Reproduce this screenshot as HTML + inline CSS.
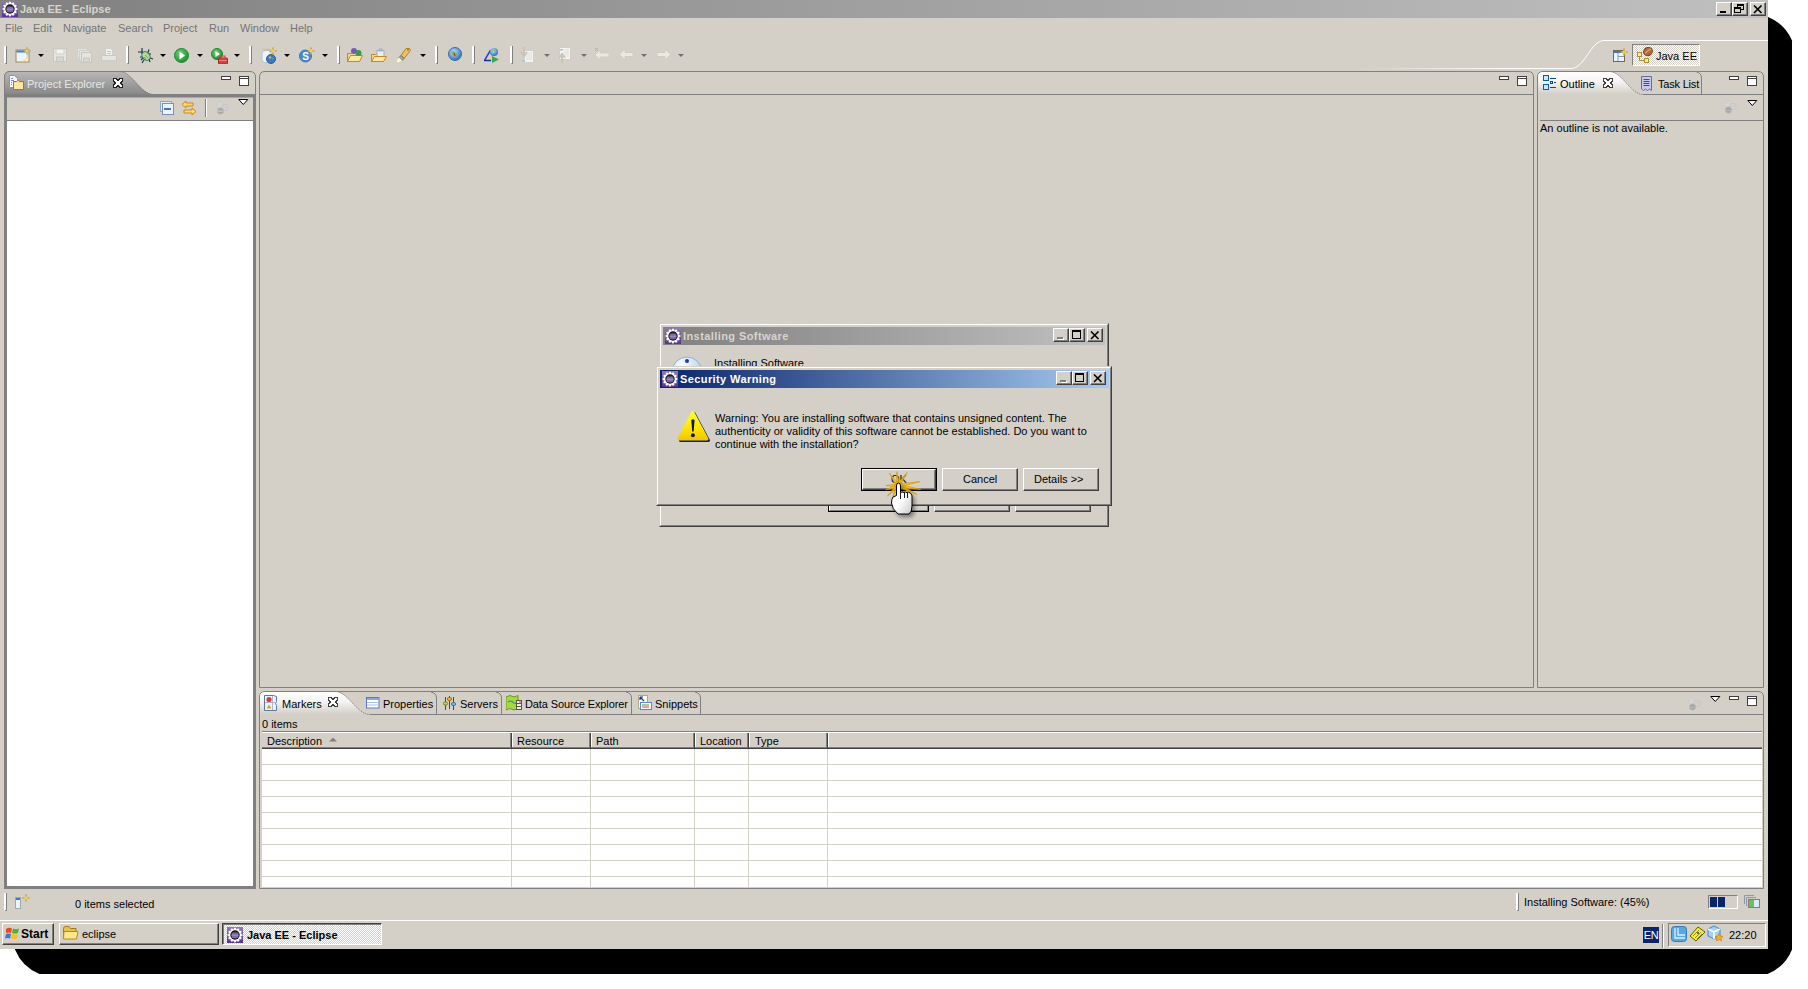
<!DOCTYPE html>
<html><head><meta charset="utf-8">
<style>
*{box-sizing:border-box}
html,body{margin:0;padding:0}
body{width:1808px;height:989px;position:relative;overflow:hidden;background:#fff;font-family:"Liberation Sans",sans-serif;font-size:11px;color:#000}
.a{position:absolute}
.t{position:absolute;white-space:nowrap;line-height:13px}
#shadow{left:15px;top:17px;width:1777px;height:957px;background:#000;border-radius:25px}
#win{left:0;top:0;width:1768px;height:949px;background:#d4d0c8;overflow:hidden}
#title{left:0;top:0;width:1768px;height:18px;background:linear-gradient(90deg,#808080,#c0c0c0)}
.btn3d{position:absolute;background:#d4d0c8;border:1px solid;border-color:#fff #404040 #404040 #fff;box-shadow:inset -1px -1px 0 #808080, inset 1px 1px 0 #d4d0c8}
.menu{color:#747474}
.sep{position:absolute;width:3px;border-left:2px solid #fff;border-right:1px solid #808080;border-bottom:1px solid #808080}
.dd{position:absolute;width:0;height:0;border-left:3px solid transparent;border-right:3px solid transparent;border-top:3px solid #000}
.panel{position:absolute;border:1px solid #808080;border-radius:6px 6px 0 0}
.minb{position:absolute;width:10px;height:4px;border:1px solid #404040;background:#fff}
.maxb{position:absolute;width:10px;height:10px;border:1px solid #404040;background:linear-gradient(#fff 0 1px,#404040 1px 2px,#fff 2px)}
.hl{position:absolute;height:1px;background:#808080}
.vl{position:absolute;width:1px;background:#808080}
</style></head><body>
<svg width="0" height="0" style="position:absolute"><defs>
<linearGradient id="eg" x1="0" y1="0" x2="0" y2="1"><stop offset="0" stop-color="#8e7cb0"/><stop offset="1" stop-color="#5a2f9a"/></linearGradient>
<linearGradient id="ec" x1="0" y1="0" x2="0" y2="1"><stop offset="0" stop-color="#3a3050"/><stop offset=".5" stop-color="#8a78b0"/><stop offset="1" stop-color="#4a3a80"/></linearGradient>
<symbol id="eicon" viewBox="0 0 16 16">
<rect width="16" height="16" fill="url(#eg)"/>
<path d="M6.52 2.18 L7.11 0.45 L8.89 0.45 L9.48 2.18 L9.63 2.23 L11.00 1.02 L12.55 1.91 L12.19 3.70 L12.30 3.81 L14.09 3.45 L14.98 5.00 L13.77 6.37 L13.82 6.52 L15.55 7.11 L15.55 8.89 L13.82 9.48 L13.77 9.63 L14.98 11.00 L14.09 12.55 L12.30 12.19 L12.19 12.30 L12.55 14.09 L11.00 14.98 L9.63 13.77 L9.48 13.82 L8.89 15.55 L7.11 15.55 L6.52 13.82 L6.37 13.77 L5.00 14.98 L3.45 14.09 L3.81 12.30 L3.70 12.19 L1.91 12.55 L1.02 11.00 L2.23 9.63 L2.18 9.48 L0.45 8.89 L0.45 7.11 L2.18 6.52 L2.23 6.37 L1.02 5.00 L1.91 3.45 L3.70 3.81 L3.81 3.70 L3.45 1.91 L5.00 1.02 L6.37 2.23z" fill="#fff" stroke="#6a5a80" stroke-width=".3"/>
<circle cx="8" cy="8" r="4.7" fill="#141018"/><circle cx="8" cy="8.2" r="3.6" fill="url(#ec)"/>
<path d="M4.8 7h6.4M4.6 8.6h6.8M5 10.2h6" stroke="#b8a8d8" stroke-width=".45"/>
</symbol></defs></svg>
<svg class="a" style="left:0;top:0" width="1808" height="989"><path d="M1000 17 H1768 A44 44 0 0 1 1792 40.5 V949.5 A44 44 0 0 1 1767.5 974 H39.5 A44 44 0 0 1 15 949.5 V500z" fill="#000"/></svg>
<div id="win" class="a">
  <!-- title bar -->
  <div id="title" class="a"></div>
  <svg class="a" style="left:2px;top:1px" width="16" height="16" viewBox="0 0 16 16"><use href="#eicon"/></svg>
  <div class="t" style="left:20px;top:3px;font-weight:bold;color:#d8d4cc">Java EE - Eclipse</div>
  <div class="btn3d" style="left:1716px;top:2px;width:16px;height:14px"><div class="a" style="left:3px;top:8px;width:6px;height:2px;background:#000"></div></div>
  <div class="btn3d" style="left:1732px;top:2px;width:16px;height:14px">
    <div class="a" style="left:4px;top:1px;width:7px;height:6px;border:1px solid #000;border-top-width:2px"></div>
    <div class="a" style="left:1px;top:4px;width:7px;height:6px;border:1px solid #000;border-top-width:2px;background:#d4d0c8"></div></div>
  <div class="btn3d" style="left:1750px;top:2px;width:16px;height:14px">
    <svg class="a" style="left:2px;top:2px" width="10" height="9" viewBox="0 0 10 9"><path d="M1 0.5 L8.5 8 M8.5 0.5 L1 8" stroke="#000" stroke-width="1.6"/></svg></div>

  <!-- menu -->
  <div class="t menu" style="left:5px;top:22px">File</div>
  <div class="t menu" style="left:33px;top:22px">Edit</div>
  <div class="t menu" style="left:63px;top:22px">Navigate</div>
  <div class="t menu" style="left:118px;top:22px">Search</div>
  <div class="t menu" style="left:163px;top:22px">Project</div>
  <div class="t menu" style="left:209px;top:22px">Run</div>
  <div class="t menu" style="left:240px;top:22px">Window</div>
  <div class="t menu" style="left:290px;top:22px">Help</div>
  <!-- toolbar -->
  <div class="sep" style="left:4px;top:46px;height:18px"></div>
  <svg class="a" style="left:15px;top:47px" width="17" height="16" viewBox="0 0 17 16">
    <rect x="1" y="3" width="13" height="12" fill="#eaf6fc" stroke="#a08850"/><rect x="1.5" y="3.5" width="12" height="2" fill="#3f7fcf"/>
    <path d="M6 14.5 Q12 14 12.5 8" stroke="#f0d070" fill="none"/>
    <path d="M12 0.5 v7 M8.5 4 h7" stroke="#c89a20" stroke-width="1.6"/><path d="M12 1.5 v5 M9.5 4 h5" stroke="#fff2b0" stroke-width=".7"/>
  </svg>
  <div class="dd" style="left:38px;top:54px;border-width:3px 3px 0"></div>
  <svg class="a" style="left:53px;top:48px" width="15" height="15" viewBox="0 0 15 15">
    <rect x=".5" y=".5" width="13" height="13" fill="#e6e4e0" stroke="#c8c6c2"/><rect x="3" y="1" width="8" height="5" fill="#f4f3f0" stroke="#d0cec8"/><rect x="3.5" y="9" width="7" height="4.5" fill="#d9d7d2" stroke="#c8c6c2"/>
  </svg>
  <svg class="a" style="left:77px;top:48px" width="16" height="15" viewBox="0 0 16 15">
    <rect x=".5" y=".5" width="10" height="10" fill="#e6e4e0" stroke="#d0cec8"/><rect x="2.5" y="2.5" width="10" height="10" fill="#e6e4e0" stroke="#d0cec8"/><rect x="4.5" y="4.5" width="10" height="10" fill="#e6e4e0" stroke="#c8c6c2"/><rect x="6.5" y="10" width="6" height="4" fill="#d9d7d2" stroke="#c8c6c2"/>
  </svg>
  <svg class="a" style="left:101px;top:48px" width="16" height="15" viewBox="0 0 16 15">
    <path d="M4.5 .5 h5 l2 2 v5 h-7z" fill="#f2f1ee" stroke="#d0cec8"/><path d="M6 3.5 h4 M6 5.5 h4" stroke="#c8c6c2"/>
    <rect x=".5" y="7.5" width="15" height="6" rx="1" fill="#e6e4e0" stroke="#c8c6c2"/><rect x="1" y="12" width="14" height="2" fill="#d0cec8"/>
  </svg>
  <div class="sep" style="left:126px;top:46px;height:18px"></div>
  <svg class="a" style="left:138px;top:48px" width="16" height="16" viewBox="0 0 16 16">
    <path d="M4 0v6 M0 4h5 M2 9h3 M3 12l2-2 M4 15l2-3 M11 1.5l-1 3 M13 6h-3 M15 11l-3-1 M12 14l-1-3" stroke="#1a3a3a" stroke-width="1.2"/>
    <ellipse cx="8" cy="8" rx="3.6" ry="4.8" transform="rotate(-40 8 8)" fill="#b8d890" stroke="#2a6a8a"/><path d="M7 7l3 3M6 9l2 2" stroke="#80a860"/>
  </svg>
  <div class="dd" style="left:160px;top:54px;border-width:3px 3px 0"></div>
  <svg class="a" style="left:174px;top:48px" width="15" height="15" viewBox="0 0 15 15">
    <defs><radialGradient id="gr" cx=".4" cy=".35" r=".7"><stop offset="0" stop-color="#7ad07a"/><stop offset="1" stop-color="#158a2a"/></radialGradient></defs>
    <circle cx="7.5" cy="7.5" r="7" fill="url(#gr)" stroke="#1f8a30"/><path d="M5.5 3.5 L11 7.5 L5.5 11.5z" fill="#fff"/>
  </svg>
  <div class="dd" style="left:197px;top:54px;border-width:3px 3px 0"></div>
  <svg class="a" style="left:211px;top:48px" width="17" height="16" viewBox="0 0 17 16">
    <circle cx="6" cy="6" r="5.5" fill="url(#gr)" stroke="#1f8a30"/><path d="M4.5 3 L9 6 L4.5 9z" fill="#fff"/>
    <rect x="7.5" y="10" width="9" height="6" rx="1" fill="#d84040" stroke="#b02020"/><rect x="10" y="8" width="4" height="2.5" fill="none" stroke="#d84040"/><path d="M8 12.5h8" stroke="#f08080"/>
  </svg>
  <div class="dd" style="left:234px;top:54px;border-width:3px 3px 0"></div>
  <div class="sep" style="left:249px;top:46px;height:18px"></div>
  <svg class="a" style="left:261px;top:47px" width="17" height="17" viewBox="0 0 17 17">
    <rect x="1" y="3.5" width="9" height="12" rx="3" fill="#f0f4f8" stroke="#b0c4d8"/><path d="M1.5 2.5h8" stroke="#d8c070" stroke-width="1.5"/>
    <circle cx="10" cy="12" r="4.5" fill="#3a7ac8" stroke="#2a5a98"/><path d="M8 10.5 q2-1 3 1 q1 2 2 0" fill="#7ab048"/><circle cx="9" cy="10.5" r="1.2" fill="#e0b040"/>
    <path d="M12 .5v7 M8.5 4h7" stroke="#c89a20" stroke-width="1.6"/><path d="M12 1.5v5 M9.5 4h5" stroke="#fff2b0" stroke-width=".7"/>
  </svg>
  <div class="dd" style="left:284px;top:54px;border-width:3px 3px 0"></div>
  <svg class="a" style="left:299px;top:47px" width="16" height="16" viewBox="0 0 16 16">
    <circle cx="6.5" cy="9" r="6" fill="#4a8ad0" stroke="#3a78c0"/><text x="3.2" y="13" font-family="Liberation Sans" font-weight="bold" font-size="10" fill="#fff">S</text>
    <path d="M12 .5v7 M8.5 4h7" stroke="#c89a20" stroke-width="1.6"/><path d="M12 1.5v5 M9.5 4h5" stroke="#fff2b0" stroke-width=".7"/>
  </svg>
  <div class="dd" style="left:322px;top:54px;border-width:3px 3px 0"></div>
  <div class="sep" style="left:337px;top:46px;height:18px"></div>
  <svg class="a" style="left:347px;top:47px" width="17" height="16" viewBox="0 0 17 16">
    <path d="M.5 6.5 h4 l1 -1 h6 v9 h-11z" fill="#f0d890" stroke="#c8862a"/><path d="M.5 14.5 l3 -6 h12 l-3 6z" fill="#fbe7a8" stroke="#c8862a"/>
    <circle cx="7" cy="4" r="3" fill="#7a58b8"/><circle cx="11.5" cy="6" r="3" fill="#3a9a48"/>
  </svg>
  <svg class="a" style="left:371px;top:47px" width="16" height="16" viewBox="0 0 16 16">
    <path d="M.5 7.5 h4 l1 -1 h7 v8 h-12z" fill="#f0d890" stroke="#c8862a"/><rect x="6" y="3.5" width="7" height="6" fill="#e8eef8" stroke="#a0b0c8"/><rect x="8" y="2" width="3" height="2" fill="none" stroke="#a0b0c8"/><path d="M.5 14.5 l3 -5 h12 l-3 5z" fill="#fbe7a8" stroke="#c8862a"/>
  </svg>
  <svg class="a" style="left:396px;top:47px" width="17" height="16" viewBox="0 0 17 16">
    <path d="M10 1.5 l3.5 0 l1 2 l-6.5 8 l-3 -3z" fill="#f0c060" stroke="#b08020"/><path d="M5 8.5 l3 3 l-2 2 l-3 -3z" fill="#a8a4a0" stroke="#787470"/><path d="M3 10.5 l3 3 l-4 2 l-1.5 -1z" fill="#fff8c0"/><circle cx="12" cy="3" r=".8" fill="#3a58a0"/>
  </svg>
  <div class="dd" style="left:420px;top:54px;border-width:3px 3px 0"></div>
  <div class="sep" style="left:435px;top:46px;height:18px"></div>
  <svg class="a" style="left:448px;top:47px" width="14" height="14" viewBox="0 0 14 14">
    <defs><radialGradient id="gl" cx=".4" cy=".35" r=".7"><stop offset="0" stop-color="#b8e0f8"/><stop offset="1" stop-color="#2a68b8"/></radialGradient></defs>
    <circle cx="7" cy="7" r="6.5" fill="url(#gl)" stroke="#3a6aa8"/><path d="M3 5 q2 -2 4 0 q1 2 3 1 q-1 3 -3 4 q-2 -2 -4 -5z" fill="#8ab848"/><path d="M6 6 l1 3" stroke="#c03030" stroke-width="1.2"/>
  </svg>
  <div class="sep" style="left:472px;top:46px;height:18px"></div>
  <svg class="a" style="left:484px;top:47px" width="16" height="16" viewBox="0 0 16 16">
    <path d="M.5 13.5 L6 4 L8.5 8" fill="none" stroke="#2a48b8" stroke-width="1.5"/><path d="M0 13.5 h7" stroke="#1a2a98" stroke-width="1.5"/>
    <circle cx="10" cy="5" r="4" fill="url(#gl)"/><path d="M8 4 q1.5 -1 3 0" stroke="#8ab848" fill="none"/>
    <path d="M8 9 L15 12.5 L8 16z" fill="#3aa848"/>
  </svg>
  <div class="sep" style="left:510px;top:46px;height:18px"></div>
  <svg class="a" style="left:520px;top:47px" width="14" height="16" viewBox="0 0 14 16">
    <rect x="4.5" y="3.5" width="9" height="12" fill="#f4f3f0" stroke="#d0cec8"/><path d="M6 6h6M6 8h6M6 10h6M6 12h6" stroke="#e0ded8"/><path d="M4 0v7 M1 5l3 4 3-4" stroke="#c8c4b8" stroke-width="2" fill="none"/><rect x="2" y="13" width="3" height="1.5" fill="#b0c0d0"/>
  </svg>
  <div class="dd" style="left:544px;top:54px;border-width:3px 3px 0;border-top-color:#707070"></div>
  <svg class="a" style="left:558px;top:47px" width="14" height="16" viewBox="0 0 14 16">
    <rect x="1.5" y=".5" width="11" height="12" fill="#f4f3f0" stroke="#d0cec8"/><path d="M6 3h5M6 5h5M6 7h5M6 9h5" stroke="#e0ded8"/><path d="M4 16v-7 M1 11l3 -4 3 4" stroke="#c8c4b8" stroke-width="2" fill="none"/><rect x="2" y="2" width="3" height="1.5" fill="#b0c0d0"/>
  </svg>
  <div class="dd" style="left:581px;top:54px;border-width:3px 3px 0;border-top-color:#707070"></div>
  <svg class="a" style="left:594px;top:48px" width="16" height="13" viewBox="0 0 16 13">
    <path d="M1 7 L6 2 V5 H15 V9 H6 V12z" fill="#eae8e0" stroke="#d0ccc0"/><path d="M1 0l3 3M1 3l3-3" stroke="#a0b0d0"/>
  </svg>
  <svg class="a" style="left:619px;top:48px" width="15" height="13" viewBox="0 0 15 13">
    <path d="M.5 6.5 L6 1 V4.5 H14 V8.5 H6 V12z" fill="#eae8e0" stroke="#d0ccc0"/>
  </svg>
  <div class="dd" style="left:641px;top:54px;border-width:3px 3px 0;border-top-color:#707070"></div>
  <svg class="a" style="left:656px;top:48px" width="15" height="13" viewBox="0 0 15 13">
    <path d="M14.5 6.5 L9 1 V4.5 H1 V8.5 H9 V12z" fill="#eae8e0" stroke="#d0ccc0"/>
  </svg>
  <div class="dd" style="left:678px;top:54px;border-width:3px 3px 0;border-top-color:#707070"></div>
  <!-- perspective switcher -->
  <svg class="a" style="left:0;top:36px" width="1768" height="36" viewBox="0 36 1768 36">
    <defs><linearGradient id="gpl" gradientUnits="userSpaceOnUse" x1="1360" y1="0" x2="1500" y2="0"><stop offset="0" stop-color="#fff" stop-opacity="0"/><stop offset="1" stop-color="#fff"/></linearGradient></defs>
    <path d="M1360 68.5 H1571 C1585 68.5 1590 41 1604 40.5 H1768" fill="none" stroke="url(#gpl)"/>
  </svg>
  <svg class="a" style="left:1613px;top:48px" width="15" height="15" viewBox="0 0 15 15">
    <rect x=".5" y="2.5" width="11" height="11" fill="#e8f6fc" stroke="#7a6a40"/><rect x="1" y="3" width="10" height="2" fill="#3a7ac8"/><path d="M5 5v8M5 8.5h6" stroke="#8a9aa8"/>
    <path d="M11 .5v7M7.5 4h7" stroke="#c89a20" stroke-width="1.6"/><path d="M11 1.5v5M8.5 4h5" stroke="#fff2b0" stroke-width=".7"/>
  </svg>
  <div class="a" style="left:1632px;top:44px;width:68px;height:22px;border:1px solid;border-color:#808080 #fff #fff #808080;background-color:#ece9e2;background-image:repeating-conic-gradient(#fff 0 25%, #d4d0c8 0 50%);background-size:2px 2px"></div>
  <svg class="a" style="left:1637px;top:47px" width="17" height="16" viewBox="0 0 17 16">
    <rect x=".5" y="5.5" width="4" height="4" fill="#f8e8a0" stroke="#b09030"/><rect x="7.5" y="11.5" width="4" height="4" fill="#f8e8a0" stroke="#b09030"/><path d="M2.5 9.5V13.5H7.5" stroke="#b09030" fill="none"/>
    <ellipse cx="11" cy="4.5" rx="4.5" ry="4" fill="#b86a38" stroke="#7a4020" transform="rotate(-30 11 4.5)"/><path d="M8 6.5 Q11 3 14 2" stroke="#f0c080" fill="none"/>
  </svg>
  <div class="t" style="left:1656px;top:50px">Java EE</div>
  <!-- Project Explorer -->
  <svg class="a" style="left:0;top:66px" width="262" height="830" viewBox="0 66 262 830">
    <defs><linearGradient id="gtab" x1="0" y1="0" x2="0" y2="1"><stop offset="0" stop-color="#b8b8b8"/><stop offset="1" stop-color="#828282"/></linearGradient></defs>
    <path d="M4.5 97 V77 Q4.5 71.5 10 71.5 H250 Q255.5 71.5 255.5 77 V97z" fill="#d4d0c8" stroke="#808080"/>
    <path d="M4.5 97 V77 Q4.5 71.5 10 71.5 H120 C132 72 141 94 153 94 H256 V97z" fill="url(#gtab)"/>
    <path d="M4.5 97 V77 Q4.5 71.5 10 71.5 H250" fill="none" stroke="#808080"/>
    <path d="M120 71.5 C132 72 141 94.5 153 94.5" fill="none" stroke="#7a7a7a" stroke-dasharray="1.5 .8"/>
    <rect x="4" y="94" width="252" height="3" fill="#808080"/>
    <rect x="4" y="97" width="3" height="792" fill="#808080"/>
    <rect x="253" y="94" width="3" height="795" fill="#808080"/>
    <rect x="4" y="886" width="252" height="3" fill="#808080"/>
    <rect x="7" y="120" width="246" height="1" fill="#808080"/>
    <rect x="7" y="121" width="246" height="765" fill="#fff"/>
  </svg>
  <svg class="a" style="left:9px;top:75px" width="16" height="16" viewBox="0 0 16 16">
    <path d="M.5 .5 h5 l3 3 v9 h-8z" fill="#f4f8ff" stroke="#b09850"/><path d="M2 3.5h2M2 5.5h3M2 7.5h1M2 9.5h1" stroke="#7a90d0"/>
    <path d="M4.5 6.5 h3 l1 -1 h1 l1 1 h4 v8 h-10z" fill="#fbd98a" stroke="#c46a14"/><path d="M5 8 h9 v6 h-9z" fill="#ffe6a8"/>
  </svg>
  <div class="t" style="left:27px;top:78px;color:#e8e6e0">Project Explorer</div>
  <svg class="a" style="left:113px;top:78px" width="10" height="10" viewBox="0 0 10 10"><defs><g id="xpe"><rect x="1" y="1" width="2" height="1"/><rect x="7" y="1" width="2" height="1"/><rect x="1" y="2" width="3" height="1"/><rect x="6" y="2" width="3" height="1"/><rect x="2" y="3" width="6" height="1"/><rect x="3" y="4" width="4" height="1"/><rect x="3" y="5" width="4" height="1"/><rect x="2" y="6" width="6" height="1"/><rect x="1" y="7" width="3" height="1"/><rect x="6" y="7" width="3" height="1"/><rect x="1" y="8" width="2" height="1"/><rect x="7" y="8" width="2" height="1"/></g></defs><g fill="#202020"><use href="#xpe" x="-1"/><use href="#xpe" x="1"/><use href="#xpe" y="-1"/><use href="#xpe" y="1"/><use href="#xpe" x="1" y="1"/><use href="#xpe" x="-1" y="-1"/><use href="#xpe" x="1" y="-1"/><use href="#xpe" x="-1" y="1"/></g><g fill="#fff"><use href="#xpe"/></g></svg>
  <div class="minb" style="left:221px;top:76px"></div>
  <div class="maxb" style="left:239px;top:76px"></div>
  <!-- PE toolbar -->
  <svg class="a" style="left:160px;top:101px" width="14" height="14" viewBox="0 0 14 14">
    <rect x=".5" y=".5" width="11" height="10" fill="#e0ecf8" stroke="#90a8c8"/><rect x="2.5" y="2.5" width="11" height="11" fill="#eaf4fc" stroke="#7890b8"/><path d="M4 8h7" stroke="#1a4a8a" stroke-width="1.5"/>
  </svg>
  <svg class="a" style="left:181px;top:100px" width="16" height="16" viewBox="0 0 16 16">
    <path d="M1 4.5 L5 1 V3 H12 V6 H5 V8z" fill="#f8d878" stroke="#c88a20"/><path d="M15 11.5 L11 8 V10 H3 V13 H11 V15z" fill="#f8d878" stroke="#c88a20"/>
  </svg>
  <div class="a" style="left:205px;top:99px;width:2px;height:18px;border-left:1px solid #808080;border-right:1px solid #fff"></div>
  <svg class="a" style="left:215px;top:101px" width="14" height="14" viewBox="0 0 14 14">
    <circle cx="4.5" cy="4" r="3.2" fill="#d6d6d6" stroke="#c4c4c4" stroke-width=".6"/><circle cx="10" cy="6.5" r="3.2" fill="#d0d0d0" stroke="#c0c0c0" stroke-width=".6"/><circle cx="5.5" cy="10" r="3.2" fill="#a8a8a8" stroke="#bcbcbc" stroke-width=".6"/><path d="M3 10.5h5M3 3.5h3M8.5 6h3" stroke="#c8c8c8" stroke-width=".6"/><path d="M2 10h6" stroke="#c8c8c8"/>
  </svg>
  <svg class="a" style="left:238px;top:99px" width="11" height="7" viewBox="0 0 11 7">
    <path d="M.8 .5 H9.8 L5.3 5.5z" fill="#fff" stroke="#000"/>
  </svg>
  <!-- Editor area -->
  <svg class="a" style="left:256px;top:66px" width="1512" height="830" viewBox="256 66 1512 830">
    <defs>
      <linearGradient id="gwt" x1="0" y1="0" x2="0" y2="1"><stop offset="0" stop-color="#fff"/><stop offset=".45" stop-color="#f4f3f1"/><stop offset="1" stop-color="#d4d0c8"/></linearGradient>
    </defs>
    <!-- editor -->
    <path d="M259.5 687.5 V77 Q259.5 71.5 265 71.5 H1528 Q1533.5 71.5 1533.5 77 V687.5z" fill="#d4d0c8" stroke="#808080"/>
    <rect x="260" y="94" width="1273" height="1" fill="#808080"/>
    <!-- outline -->
    <path d="M1537.5 687.5 V77 Q1537.5 71.5 1543 71.5 H1758 Q1763.5 71.5 1763.5 77 V687.5z" fill="#d4d0c8" stroke="#808080"/>
    <path d="M1538 94 V77 Q1538 72 1543 72 H1610 C1622 72 1631 94 1643 94z" fill="url(#gwt)"/>
    <path d="M1610 71.5 C1622 72 1631 94.5 1643 94.5" fill="none" stroke="#8a8a8a" stroke-dasharray="1.5 .8"/>
    <rect x="1643" y="94" width="120" height="1" fill="#808080"/>
    <path d="M1696.5 72 Q1701.5 73 1701.5 78 V94" fill="none" stroke="#808080"/>
    <rect x="1540" y="120" width="223" height="1" fill="#808080"/>
    <!-- markers -->
    <path d="M259.5 888.5 V697 Q259.5 691.5 265 691.5 H1758 Q1763.5 691.5 1763.5 697 V888.5z" fill="#d4d0c8" stroke="#808080"/>
    <path d="M260 714 V697 Q260 692 265 692 H336 C348 692 357 714 370 714z" fill="url(#gwt)"/>
    <path d="M336 691.5 C348 692 357 714.5 370 714.5" fill="none" stroke="#8a8a8a" stroke-dasharray="1.5 .8"/>
    <rect x="370" y="714" width="1393" height="1" fill="#808080"/>
    <path d="M431 692 Q436.5 693 436.5 698 V714" fill="none" stroke="#808080"/>
    <path d="M496 692 Q501.5 693 501.5 698 V714" fill="none" stroke="#808080"/>
    <path d="M626 692 Q631.5 693 631.5 698 V714" fill="none" stroke="#808080"/>
    <path d="M695 692 Q700.5 693 700.5 698 V714" fill="none" stroke="#808080"/>
    <!-- table -->
    <rect x="262" y="731" width="1500" height="156" fill="#fff"/>
    <rect x="262" y="731" width="1500" height="1" fill="#808080"/>
    
    <rect x="262" y="732" width="1500" height="15" fill="#d4d0c8"/>
    <rect x="262" y="732" width="1500" height="1" fill="#fff"/>
    <rect x="262" y="747" width="1500" height="1" fill="#808080"/>
    <rect x="262" y="748" width="1500" height="1" fill="#404040"/>
    <g fill="#d4d0c8">
      <rect x="262" y="764" width="1500" height="1"/><rect x="262" y="780" width="1500" height="1"/><rect x="262" y="796" width="1500" height="1"/><rect x="262" y="812" width="1500" height="1"/>
      <rect x="262" y="828" width="1500" height="1"/><rect x="262" y="844" width="1500" height="1"/><rect x="262" y="860" width="1500" height="1"/><rect x="262" y="876" width="1500" height="1"/>
      <rect x="511" y="749" width="1" height="138"/><rect x="590" y="749" width="1" height="138"/><rect x="694" y="749" width="1" height="138"/><rect x="748" y="749" width="1" height="138"/><rect x="827" y="749" width="1" height="138"/>
    </g>
    <g>
      <rect x="510" y="733" width="1" height="14" fill="#808080"/><rect x="511" y="733" width="1" height="15" fill="#404040"/><rect x="512" y="733" width="1" height="14" fill="#fff"/>
      <rect x="589" y="733" width="1" height="14" fill="#808080"/><rect x="590" y="733" width="1" height="15" fill="#404040"/><rect x="591" y="733" width="1" height="14" fill="#fff"/>
      <rect x="693" y="733" width="1" height="14" fill="#808080"/><rect x="694" y="733" width="1" height="15" fill="#404040"/><rect x="695" y="733" width="1" height="14" fill="#fff"/>
      <rect x="747" y="733" width="1" height="14" fill="#808080"/><rect x="748" y="733" width="1" height="15" fill="#404040"/><rect x="749" y="733" width="1" height="14" fill="#fff"/>
      <rect x="826" y="733" width="1" height="14" fill="#808080"/><rect x="827" y="733" width="1" height="15" fill="#404040"/><rect x="828" y="733" width="1" height="14" fill="#fff"/>
    </g>
    <path d="M329 741.5 h8 l-4 -4z" fill="#808080"/>
  </svg>
  <!-- editor min/max -->
  <div class="minb" style="left:1499px;top:76px"></div>
  <div class="maxb" style="left:1517px;top:76px"></div>
  <!-- outline tabs -->
  <svg class="a" style="left:1543px;top:75px" width="14" height="15" viewBox="0 0 14 15">
    <rect x=".5" y=".5" width="5" height="5" fill="#c8e8fc" stroke="#0a5aa8"/><rect x=".5" y="9.5" width="5" height="5" fill="#c8e8fc" stroke="#0a5aa8"/>
    <path d="M7 3.5h6M7 12.5h6M11 7.5h2" stroke="#0a4a90"/><rect x="7.5" y="6.5" width="2" height="2" fill="#fff" stroke="#0a4a90"/>
  </svg>
  <div class="t" style="left:1560px;top:78px">Outline</div>
  <svg class="a" style="left:1603px;top:78px" width="10" height="10" viewBox="0 0 10 10"><defs><g id="xol"><rect x="1" y="1" width="2" height="1"/><rect x="7" y="1" width="2" height="1"/><rect x="1" y="2" width="3" height="1"/><rect x="6" y="2" width="3" height="1"/><rect x="2" y="3" width="6" height="1"/><rect x="3" y="4" width="4" height="1"/><rect x="3" y="5" width="4" height="1"/><rect x="2" y="6" width="6" height="1"/><rect x="1" y="7" width="3" height="1"/><rect x="6" y="7" width="3" height="1"/><rect x="1" y="8" width="2" height="1"/><rect x="7" y="8" width="2" height="1"/></g></defs><g fill="#404040"><use href="#xol" x="-1"/><use href="#xol" x="1"/><use href="#xol" y="-1"/><use href="#xol" y="1"/><use href="#xol" x="1" y="1"/><use href="#xol" x="-1" y="-1"/><use href="#xol" x="1" y="-1"/><use href="#xol" x="-1" y="1"/></g><g fill="#fff"><use href="#xol"/></g></svg>
  <svg class="a" style="left:1641px;top:76px" width="11" height="16" viewBox="0 0 11 16">
    <path d="M.5 .5 h10 v14 l-2 -1.5 l-2 1.5 l-2 -1.5 l-2 1.5 l-2 -1.5z" fill="#c8c8f0" stroke="#6a6a9a"/><path d="M2.5 3.5h6M2.5 5.5h6M2.5 7.5h6M2.5 9.5h6" stroke="#4a4a6a"/>
  </svg>
  <div class="t" style="left:1658px;top:78px;letter-spacing:-.2px">Task List</div>
  <div class="minb" style="left:1729px;top:76px"></div>
  <div class="maxb" style="left:1747px;top:76px"></div>
  <svg class="a" style="left:1723px;top:100px" width="14" height="14" viewBox="0 0 14 14">
    <circle cx="4.5" cy="4" r="3.2" fill="#d6d6d6" stroke="#c4c4c4" stroke-width=".6"/><circle cx="10" cy="6.5" r="3.2" fill="#d0d0d0" stroke="#c0c0c0" stroke-width=".6"/><circle cx="5.5" cy="10" r="3.2" fill="#a8a8a8" stroke="#bcbcbc" stroke-width=".6"/><path d="M3 10.5h5M3 3.5h3M8.5 6h3" stroke="#c8c8c8" stroke-width=".6"/>
  </svg>
  <svg class="a" style="left:1747px;top:100px" width="11" height="7" viewBox="0 0 11 7"><path d="M.8 .5 H9.8 L5.3 5.5z" fill="#fff" stroke="#000"/></svg>
  <div class="t" style="left:1540px;top:122px">An outline is not available.</div>

  <!-- markers tabs -->
  <svg class="a" style="left:264px;top:695px" width="15" height="16" viewBox="0 0 15 16">
    <path d="M.5 .5 h9 l3 1 v5 l-1 2 l1 2 v5 h-12z" fill="#e8f6fc" stroke="#5a78a8"/><path d="M1 7.5h11M8.5 1v14" stroke="#a8b8d8"/>
    <circle cx="5" cy="4.5" r="2.6" fill="#e03838"/><path d="M2.5 13.5 l2.5 -4 l2.5 4z" fill="#e8a020"/>
  </svg>
  <div class="t" style="left:282px;top:698px">Markers</div>
  <svg class="a" style="left:328px;top:697px" width="10" height="10" viewBox="0 0 10 10"><defs><g id="xmk"><rect x="1" y="1" width="2" height="1"/><rect x="7" y="1" width="2" height="1"/><rect x="1" y="2" width="3" height="1"/><rect x="6" y="2" width="3" height="1"/><rect x="2" y="3" width="6" height="1"/><rect x="3" y="4" width="4" height="1"/><rect x="3" y="5" width="4" height="1"/><rect x="2" y="6" width="6" height="1"/><rect x="1" y="7" width="3" height="1"/><rect x="6" y="7" width="3" height="1"/><rect x="1" y="8" width="2" height="1"/><rect x="7" y="8" width="2" height="1"/></g></defs><g fill="#404040"><use href="#xmk" x="-1"/><use href="#xmk" x="1"/><use href="#xmk" y="-1"/><use href="#xmk" y="1"/><use href="#xmk" x="1" y="1"/><use href="#xmk" x="-1" y="-1"/><use href="#xmk" x="1" y="-1"/><use href="#xmk" x="-1" y="1"/></g><g fill="#fff"><use href="#xmk"/></g></svg>
  <svg class="a" style="left:366px;top:697px" width="14" height="12" viewBox="0 0 14 12">
    <rect x=".5" y=".5" width="12.5" height="10.5" fill="#fff" stroke="#5a7ab8"/><rect x="1" y="1" width="12" height="2" fill="#8aa8d8"/><path d="M1 5.5h12M1 8h12" stroke="#a8c0e0"/>
  </svg>
  <div class="t" style="left:383px;top:698px">Properties</div>
  <svg class="a" style="left:443px;top:696px" width="13" height="15" viewBox="0 0 13 15">
    <path d="M2.5 1v13M6.5 0v13M10.5 1v13" stroke="#2a48a8"/><ellipse cx="2.5" cy="7.5" rx="2.2" ry="1.6" fill="#c8d830" stroke="#6a8a20"/><ellipse cx="6.5" cy="3" rx="2.2" ry="1.6" fill="#f0b830" stroke="#a07010"/><ellipse cx="10.5" cy="8" rx="2.2" ry="1.6" fill="#70c0e8" stroke="#3a78a8"/>
  </svg>
  <div class="t" style="left:460px;top:698px">Servers</div>
  <svg class="a" style="left:506px;top:695px" width="16" height="16" viewBox="0 0 16 16">
    <path d="M0 2 l4 -1.5 l4 1.5 l4 -1.5 v13 l-4 1.5 l-4 -1.5 l-4 1.5z" fill="#a8d840" stroke="#6a9a20"/><path d="M2 7 q3 -2 6 1 q2 1 4 -1" stroke="#3a8ac8" fill="none" stroke-width="1.2"/>
    <rect x="10.5" y="5.5" width="5" height="3" fill="#f0f0e0" stroke="#5a5a40"/><rect x="10.5" y="8.5" width="5" height="3" fill="#f0f0e0" stroke="#5a5a40"/><rect x="10.5" y="11.5" width="5" height="3" fill="#f0f0e0" stroke="#5a5a40"/><circle cx="14" cy="7" r=".8" fill="#e02020"/>
  </svg>
  <div class="t" style="left:525px;top:698px;letter-spacing:-.12px">Data Source Explorer</div>
  <svg class="a" style="left:638px;top:695px" width="14" height="15" viewBox="0 0 14 15">
    <rect x=".5" y=".5" width="9" height="13" fill="#f8f8f0" stroke="#b0a880"/><rect x="2.5" y="7.5" width="11" height="7" fill="#fff" stroke="#5a88c8"/><path d="M4 10h7" stroke="#40a040"/><path d="M4 12h7" stroke="#e04040"/><path d="M2 2 l4 4 M2 2 h3 M2 2 v3" stroke="#1a3a8a" stroke-width="1.2"/>
  </svg>
  <div class="t" style="left:655px;top:698px">Snippets</div>
  <!-- markers toolbar -->
  <svg class="a" style="left:1687px;top:697px" width="14" height="14" viewBox="0 0 14 14">
    <circle cx="4.5" cy="4" r="3.2" fill="#d6d6d6" stroke="#c4c4c4" stroke-width=".6"/><circle cx="10" cy="6.5" r="3.2" fill="#d0d0d0" stroke="#c0c0c0" stroke-width=".6"/><circle cx="5.5" cy="10" r="3.2" fill="#a8a8a8" stroke="#bcbcbc" stroke-width=".6"/><path d="M3 10.5h5M3 3.5h3M8.5 6h3" stroke="#c8c8c8" stroke-width=".6"/>
  </svg>
  <svg class="a" style="left:1710px;top:696px" width="11" height="7" viewBox="0 0 11 7"><path d="M.8 .5 H9.8 L5.3 5.5z" fill="#fff" stroke="#000"/></svg>
  <div class="minb" style="left:1729px;top:696px"></div>
  <div class="maxb" style="left:1747px;top:696px"></div>
  <div class="t" style="left:262px;top:718px">0 items</div>
  <div class="t" style="left:267px;top:735px">Description</div>
  <div class="t" style="left:517px;top:735px">Resource</div>
  <div class="t" style="left:596px;top:735px">Path</div>
  <div class="t" style="left:700px;top:735px">Location</div>
  <div class="t" style="left:755px;top:735px">Type</div>
  <!-- status bar -->
  <div class="a" style="left:4px;top:893px;width:3px;height:18px;border-left:2px solid #fff;border-right:1px solid #808080;border-bottom:1px solid #808080"></div>
  <svg class="a" style="left:15px;top:894px" width="16" height="15" viewBox="0 0 16 15">
    <rect x=".5" y="3.5" width="5" height="11" fill="#e8f4fc" stroke="#a0a8b8"/><rect x="1" y="4" width="4" height="2" fill="#3a7ac8"/>
    <path d="M11 .5v7M7.5 4h7" stroke="#c89a20" stroke-width="1.6"/><path d="M11 1.5v5M8.5 4h5" stroke="#fff2b0" stroke-width=".7"/>
  </svg>
  <div class="t" style="left:75px;top:898px">0 items selected</div>
  <div class="a" style="left:1516px;top:893px;width:3px;height:18px;border-left:2px solid #fff;border-right:1px solid #808080;border-bottom:1px solid #808080"></div>
  <div class="t" style="left:1524px;top:896px">Installing Software: (45%)</div>
  <div class="a" style="left:1708px;top:895px;width:30px;height:14px;border:1px solid;border-color:#808080 #fff #fff #808080;background:#d4d0c8">
    <div class="a" style="left:1px;top:1px;width:7px;height:10px;background:#0a246a"></div>
    <div class="a" style="left:9px;top:1px;width:7px;height:10px;background:#0a246a"></div>
  </div>
  <svg class="a" style="left:1744px;top:895px" width="16" height="13" viewBox="0 0 16 13">
    <path d="M.5 9 V.5 H10" fill="none" stroke="#8a9aa8"/><path d="M2.5 11 V2.5 H12" fill="none" stroke="#8a9aa8"/>
    <rect x="4.5" y="4.5" width="11" height="8" fill="#d8ecfa" stroke="#8a7a6a"/><rect x="5" y="5" width="5" height="7" fill="#6ac06a"/>
  </svg>

  <!-- taskbar -->
  <div class="a" style="left:0;top:920px;width:1768px;height:1px;background:#fff"></div>
  <div class="btn3d" style="left:2px;top:923px;width:52px;height:22px"></div>
  <svg class="a" style="left:5px;top:926px" width="15" height="15" viewBox="0 0 15 15">
    <path d="M1 3 Q4 1 7 2.5 L6 7 Q3.5 6 1 7z" fill="#e84a18"/><path d="M8 2.5 Q11 4 14 2.5 L13 7 Q10 8 7 7z" fill="#50b030"/>
    <path d="M1 8 Q3.5 7 6 8 L5 12.5 Q2.5 11.5 0 12.5z" fill="#3a78e0"/><path d="M7 8 Q10 9 13 8 L12 12.5 Q9 13.5 6 12.5z" fill="#f8c020"/>
  </svg>
  <div class="t" style="left:21px;top:928px;font-weight:bold;font-size:12px">Start</div>
  <div class="btn3d" style="left:59px;top:923px;width:160px;height:22px"></div>
  <svg class="a" style="left:63px;top:926px" width="16" height="14" viewBox="0 0 16 14">
    <path d="M.5 2.5 Q.5 .5 2.5 .5 H6 L7.5 2.5 H13 V12.5 H.5z" fill="#e8c050" stroke="#a87a10"/><path d="M1 5.5 H15 L13.5 13 H.5z" fill="#fce88a" stroke="#b88a20"/>
  </svg>
  <div class="t" style="left:82px;top:928px">eclipse</div>
  <div class="a" style="left:222px;top:923px;width:160px;height:22px;border:1px solid;border-color:#404040 #fff #fff #404040;box-shadow:inset 1px 1px 0 #808080;background-color:#ece9e2;background-image:repeating-conic-gradient(#fff 0 25%, #d4d0c8 0 50%);background-size:2px 2px"></div>
  <svg class="a" style="left:227px;top:927px" width="16" height="16" viewBox="0 0 16 16"><use href="#eicon"/></svg>
  <div class="t" style="left:247px;top:929px;font-weight:bold">Java EE - Eclipse</div>
  <!-- tray -->
  <div class="a" style="left:1643px;top:927px;width:16px;height:16px;background:#0a246a;color:#fff;font-size:11px;line-height:16px;text-align:center;letter-spacing:-.5px">EN</div>
  <div class="a" style="left:1662px;top:924px;width:2px;height:24px;border-left:1px solid #808080;border-right:1px solid #fff"></div>
  <div class="a" style="left:1668px;top:923px;width:98px;height:24px;border:1px solid;border-color:#808080 #fff #fff #808080"></div>
  <svg class="a" style="left:1671px;top:926px" width="16" height="16" viewBox="0 0 16 16">
    <rect x=".5" y=".5" width="15" height="15" rx="3" fill="#5aa8e0" stroke="#3a78b8"/><path d="M4 2v10h10M7 2v7h7" stroke="#d8f0ff" fill="none" stroke-width="1.3"/>
  </svg>
  <svg class="a" style="left:1689px;top:926px" width="17" height="16" viewBox="0 0 17 16">
    <path d="M1 10 L9 1 L16 6 L7 15z" fill="#f8f020" stroke="#5a5a10"/><path d="M4 10l6-6M6 12l6-6M8 13l5-5" stroke="#8a8a20"/><circle cx="9" cy="7" r="1" fill="#2a48a8"/>
  </svg>
  <svg class="a" style="left:1707px;top:925px" width="17" height="17" viewBox="0 0 17 17">
    <path d="M7 1 L13 4 V11 L7 14 L1 11 V4z" fill="#a8d0f0" stroke="#3a88c8"/><path d="M1 4 L7 7 L13 4 M7 7 V14" stroke="#fff" fill="none" stroke-width="1.5"/>
    <path d="M12 8.5 l1.3 2.6 2.7 .3 -2 1.9 .6 2.7 -2.6 -1.4 -2.6 1.4 .6 -2.7 -2 -1.9 2.7 -.3z" fill="#f8b020" stroke="#d07010" stroke-width=".6"/>
  </svg>
  <div class="t" style="left:1729px;top:929px">22:20</div>
</div>
  <!-- Installing Software dialog (behind) -->
  <div class="a" style="left:659px;top:323px;width:450px;height:204px;background:#d4d0c8;border:1px solid;border-color:#d4d0c8 #404040 #404040 #d4d0c8">
    <div class="a" style="left:0;top:0;width:448px;height:202px;border:1px solid;border-color:#fff #808080 #808080 #fff"></div>
  </div>
  <div class="a" style="left:663px;top:327px;width:442px;height:18px;background:linear-gradient(90deg,#808080,#c0c0c0)"></div>
  <svg class="a" style="left:665px;top:328px" width="16" height="16" viewBox="0 0 16 16"><use href="#eicon"/></svg>
  <div class="t" style="left:683px;top:330px;font-weight:bold;color:#d8d4cc;letter-spacing:.42px">Installing Software</div>
  <div class="btn3d" style="left:1053px;top:328px;width:16px;height:14px"><div class="a" style="left:3px;top:8px;width:6px;height:2px;background:#808080;box-shadow:1px 1px 0 #fff"></div></div>
  <div class="btn3d" style="left:1069px;top:328px;width:16px;height:14px"><div class="a" style="left:2px;top:1px;width:9px;height:9px;border:1px solid #000;border-top-width:2px"></div></div>
  <div class="btn3d" style="left:1087px;top:328px;width:16px;height:14px"><svg class="a" style="left:2px;top:2px" width="10" height="9" viewBox="0 0 10 9"><path d="M1 0.5 L8.5 8 M8.5 0.5 L1 8" stroke="#000" stroke-width="1.6"/></svg></div>
  <svg class="a" style="left:671px;top:356px" width="33" height="12" viewBox="0 0 33 12">
    <defs><radialGradient id="gi" cx=".35" cy=".3" r=".8"><stop offset="0" stop-color="#fff"/><stop offset="1" stop-color="#a8c8e8"/></radialGradient></defs>
    <circle cx="16" cy="16" r="15" fill="url(#gi)" stroke="#90b0d0"/><circle cx="16" cy="5" r="2" fill="#1a3aa8"/>
  </svg>
  <div class="t" style="left:714px;top:357px">Installing Software</div>
  <div class="a" style="left:828px;top:505px;width:101px;height:7px;border:1px solid #000;border-top:0"><div class="a" style="left:0;top:0;width:99px;height:6px;border-bottom:1px solid #808080;border-right:1px solid #808080;border-left:1px solid #fff"></div></div>
  <div class="a" style="left:934px;top:505px;width:76px;height:7px;border-right:1px solid #404040;border-bottom:1px solid #404040;border-left:1px solid #fff"><div class="a" style="left:0;top:0;width:74px;height:6px;border-bottom:1px solid #808080;border-right:1px solid #808080"></div></div>
  <div class="a" style="left:1015px;top:505px;width:76px;height:7px;border-right:1px solid #404040;border-bottom:1px solid #404040;border-left:1px solid #fff"><div class="a" style="left:0;top:0;width:74px;height:6px;border-bottom:1px solid #808080;border-right:1px solid #808080"></div></div>

  <!-- Security Warning dialog -->
  <div class="a" style="left:656px;top:366px;width:456px;height:140px;background:#d4d0c8;border:1px solid;border-color:#d4d0c8 #404040 #404040 #d4d0c8">
    <div class="a" style="left:0;top:0;width:454px;height:138px;border:1px solid;border-color:#fff #808080 #808080 #fff"></div>
  </div>
  <div class="a" style="left:660px;top:370px;width:449px;height:18px;background:linear-gradient(90deg,#0a246a,#a6caf0)"></div>
  <svg class="a" style="left:662px;top:371px" width="16" height="16" viewBox="0 0 16 16"><use href="#eicon"/></svg>
  <div class="t" style="left:680px;top:373px;font-weight:bold;color:#fff;letter-spacing:.4px">Security Warning</div>
  <div class="btn3d" style="left:1056px;top:371px;width:16px;height:14px"><div class="a" style="left:3px;top:8px;width:6px;height:2px;background:#808080;box-shadow:1px 1px 0 #fff"></div></div>
  <div class="btn3d" style="left:1072px;top:371px;width:16px;height:14px"><div class="a" style="left:2px;top:1px;width:9px;height:9px;border:1px solid #000;border-top-width:2px"></div></div>
  <div class="btn3d" style="left:1090px;top:371px;width:16px;height:14px"><svg class="a" style="left:2px;top:2px" width="10" height="9" viewBox="0 0 10 9"><path d="M1 0.5 L8.5 8 M8.5 0.5 L1 8" stroke="#000" stroke-width="1.6"/></svg></div>
  <svg class="a" style="left:677px;top:410px" width="34" height="34" viewBox="0 0 34 34">
    <defs><linearGradient id="gw" x1="0" y1="0" x2="0" y2="1"><stop offset="0" stop-color="#ffff20"/><stop offset=".6" stop-color="#ffe600"/><stop offset="1" stop-color="#f0c800"/></linearGradient></defs>
    <path d="M17 3.5 L31.5 30.5 H3.5z" fill="#1a1a78" stroke="#1a1a78" stroke-width="3" stroke-linejoin="round"/>
    <path d="M15.8 2.5 L30 29 H2z" fill="url(#gw)" stroke="url(#gw)" stroke-width="3" stroke-linejoin="round"/>
    <path d="M14.3 10 Q16 8.5 17.6 10 L16.6 21.5 H15.2z" fill="#141450"/><circle cx="15.9" cy="25.3" r="2" fill="#141450"/>
  </svg>
  <div class="t" style="left:715px;top:412px">Warning: You are installing software that contains unsigned content. The</div>
  <div class="t" style="left:715px;top:425px">authenticity or validity of this software cannot be established. Do you want to</div>
  <div class="t" style="left:715px;top:438px">continue with the installation?</div>
  <div class="a" style="left:861px;top:468px;width:76px;height:23px;border:1px solid #000;background:#d4d0c8">
    <div class="a" style="left:0;top:0;width:74px;height:21px;border:1px solid;border-color:#fff #404040 #404040 #fff;box-shadow:inset -1px -1px 0 #808080"></div>
  </div>
  <div class="t" style="left:891px;top:473px">OK</div>
  <div class="btn3d" style="left:942px;top:468px;width:76px;height:23px"></div>
  <div class="t" style="left:963px;top:473px">Cancel</div>
  <div class="btn3d" style="left:1023px;top:468px;width:76px;height:23px"></div>
  <div class="t" style="left:1034px;top:473px">Details &gt;&gt;</div>
  <!-- click starburst + hand cursor -->
  <svg class="a" style="left:880px;top:468px" width="50" height="52" viewBox="0 0 50 52">
    <defs><filter id="fs" x="-40%" y="-40%" width="180%" height="180%"><feGaussianBlur stdDeviation="2"/></filter>
    <linearGradient id="ghand" x1="0" y1="0" x2="1" y2="1"><stop offset=".5" stop-color="#fff"/><stop offset="1" stop-color="#c8c8c8"/></linearGradient></defs>
    <path d="M19.3 16.6 L9.4 5.2 L16.7 18.4 z M19.6 17.4 L16.8 3.6 L16.4 17.6 z M19.3 18.4 L27.2 4.4 L16.7 16.6 z M18.3 19.1 L39.7 13.7 L17.7 15.9 z M17.7 19.1 L40.7 21.5 L18.3 15.9 z M17.3 19.0 L37.0 26.4 L18.7 16.0 z M17.5 16.0 L5.8 21.9 L18.5 19.0 z M18.0 15.9 L6.0 17.5 L18.0 19.1 z M16.9 16.4 L7.4 28.1 L19.1 18.6 z M16.5 16.8 L12.9 28.4 L19.5 18.2 z" fill="#f4c020" fill-opacity=".85" stroke="#d89a00" stroke-width=".7"/>
    <path d="M18 46 Q12 41 11.5 35 Q11.5 31 13 29 L16.5 27.5 V18 Q16.5 15 18.5 15 Q20.5 15 20.5 18 V24.5 Q22 23.5 24 24.5 Q25 23.5 27 24.5 Q28.5 23.5 30 25 Q32 25.5 32 28 V38 Q32 44 29 46z" fill="#000" opacity=".45" filter="url(#fs)" transform="translate(2.5 3)"/>
    <path d="M18 46 Q12 41 11.5 35 Q11.5 31 13 29 L16.5 27.5 V18 Q16.5 15 18.5 15 Q20.5 15 20.5 18 V24.5 Q22 23.5 24 24.5 Q25 23.5 27 24.5 Q28.5 23.5 30 25 Q32 25.5 32 28 V38 Q32 44 29 46z" fill="url(#ghand)" stroke="#000" stroke-width="1"/>
    <path d="M20.5 24.5 V31 M24.5 24.5 V30 M27.5 24.5 V30" stroke="#000" stroke-width=".9"/>
  </svg>
</body></html>
